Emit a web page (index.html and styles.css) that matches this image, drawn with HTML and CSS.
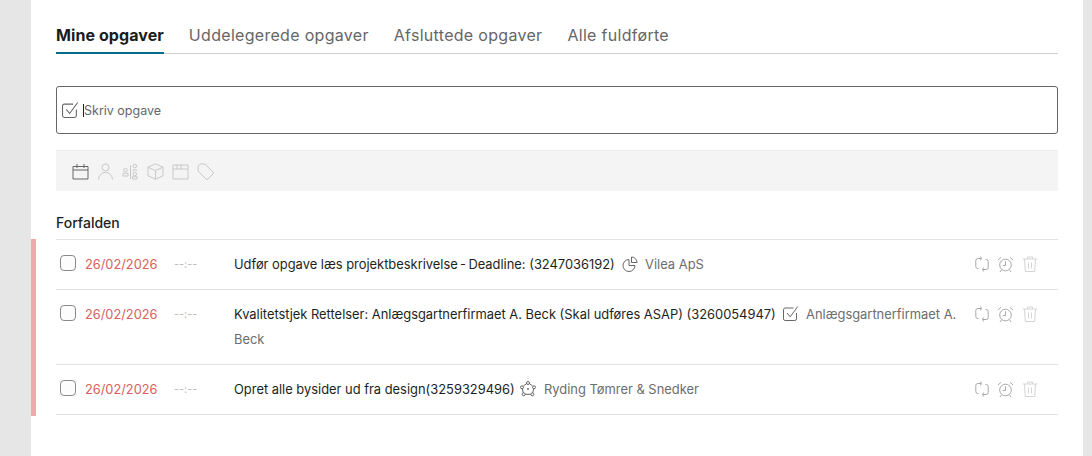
FILE: index.html
```html
<!DOCTYPE html>
<html lang="da">
<head>
  <meta charset="UTF-8" />
  <title>Mine opgaver</title>
  <link rel="stylesheet" href="styles.css">
</head>
<body>
  <svg class="defs" width="0" height="0">
    <symbol id="i-check" viewBox="0 0 16 16"><path d="M13.500 7v5.800a1.700 1.700 0 0 1-1.700 1.700H2.200A1.700 1.700 0 0 1 .5 12.800V3.700A1.700 1.700 0 0 1 2.200 2H10.500M4 7l3.200 3.800L14.800 .5"/></symbol>
    <symbol id="i-repeat" viewBox="0 0 14 16"><path d="M6 2.500H2.800A2 2 0 0 0 .8 4.500v6a2 2 0 0 0 2 2H3.500M5 .6 7 2.500 5 4.400M8 13.500h3.200a2 2 0 0 0 2-2v-6a2 2 0 0 0-2-2H10.500M9 15.400 7 13.500 9 11.600"/></symbol>
    <symbol id="i-alarm" viewBox="0 0 17 17"><circle cx="8.500" cy="9" r="5.800"/><path d="M8.500 5.200v4.300H5.800M1 4 4 1.300M16 4 13 1.300M4.500 13.800 3 16M12.500 13.800 14 16"/></symbol>
    <symbol id="i-trash" viewBox="0 0 16 16"><path d="M.8 3h14.400M5.500 3V1h5v2M2.500 3l.8 12.500h9.400L13.500 3M6.500 6.500v6M9.500 6.500v6"/></symbol>
  </svg>

  <main class="page">
    <nav class="tabs">
      <a class="tab active" href="#">Mine opgaver</a>
      <a class="tab" href="#">Uddelegerede opgaver</a>
      <a class="tab" href="#">Afsluttede opgaver</a>
      <a class="tab" href="#">Alle fuldførte</a>
    </nav>

    <div class="task-input">
      <svg class="icon-check-lg"><use href="#i-check"/></svg>
      <span class="caret"></span>
      <span class="placeholder">Skriv opgave</span>
    </div>

    <div class="toolbar">
      <svg class="tool tool-on" viewBox="0 0 17 17"><path d="M1 3.500h15v12.500H1zM1 7h15M5 1v4M12 1v4"/></svg>
      <svg class="tool" viewBox="0 0 17 17"><circle cx="8.500" cy="4.500" r="3.500"/><path d="M1.500 16.500c.5-4.500 3.200-7 7-7s6.500 2.500 7 7"/></svg>
      <svg class="tool" viewBox="0 0 17 17"><circle cx="3.500" cy="7" r="1.800"/><path d="M1 13v-2.800h5V13zM8.500 2v14"/><circle cx="12.800" cy="3" r="1.800"/><path d="M10.500 8c0-1.800 4.600-1.800 4.600 0"/><circle cx="12.800" cy="11" r="1.800"/><path d="M10.500 16v-2.300h4.600V16z"/></svg>
      <svg class="tool" viewBox="0 0 17 17"><path d="M8.500 .8 16 4.200v8.600L8.500 16.200 1 12.800V4.200zM1 4.200 8.500 7.600 16 4.200M8.500 7.600v8.600"/></svg>
      <svg class="tool" viewBox="0 0 17 17"><path d="M1 2h15v14H1zM1 6h15M5 2v4M9 2v4"/></svg>
      <svg class="tool" viewBox="0 0 17 17"><path d="M1 3 3.500 1H8l8 8a1.500 1.500 0 0 1 0 2l-5 5a1.500 1.500 0 0 1-2 0L1 8zM5 4.500h.1"/></svg>
    </div>

    <h2 class="group-title">Forfalden</h2>

    <ul class="tasks">
      <li class="task">
        <input class="task-box" type="checkbox">
        <span class="task-date">26/02/2026</span>
        <span class="task-time">--:--</span>
        <p class="task-text">Udfør opgave læs projektbeskrivelse&thinsp;-&thinsp;Deadline: (3247036192)
          <svg class="kind" viewBox="0 0 16 16"><path d="M7 3.500a6 6 0 1 0 6 6H7zM9.500 1v5.500H15A5.500 5.500 0 0 0 9.500 1z"/></svg>
          <span class="client">Vilea ApS</span></p>
        <div class="actions">
          <svg class="act"><use href="#i-repeat"/></svg>
          <svg class="act act-alarm"><use href="#i-alarm"/></svg>
          <svg class="act act-trash"><use href="#i-trash"/></svg>
        </div>
      </li>
      <li class="task">
        <input class="task-box" type="checkbox">
        <span class="task-date">26/02/2026</span>
        <span class="task-time">--:--</span>
        <p class="task-text">Kvalitetstjek Rettelser: Anlægsgartnerfirmaet A. Beck (Skal udføres ASAP) (3260054947)
          <svg class="kind"><use href="#i-check"/></svg>
          <span class="client">Anlægsgartnerfirmaet A.</span>
          <span class="client">Beck</span></p>
        <div class="actions">
          <svg class="act"><use href="#i-repeat"/></svg>
          <svg class="act act-alarm"><use href="#i-alarm"/></svg>
          <svg class="act act-trash"><use href="#i-trash"/></svg>
        </div>
      </li>
      <li class="task">
        <input class="task-box" type="checkbox">
        <span class="task-date">26/02/2026</span>
        <span class="task-time">--:--</span>
        <p class="task-text">Opret alle bysider ud fra design(3259329496)
          <svg class="kind kind-hub" viewBox="0 0 18 18"><path d="M7.500 3.700 4.500 5.800M10.500 3.700 13.500 5.800M3.300 8.800 4.300 12.800M14.700 8.800 13.700 12.800M6.100 14.300h5.800"/><circle cx="9" cy="3" r="1.500"/><circle cx="3" cy="7.300" r="1.500"/><circle cx="15" cy="7.300" r="1.500"/><circle cx="4.600" cy="14.300" r="1.500"/><circle cx="13.400" cy="14.300" r="1.500"/><circle cx="9" cy="9" r=".6"/></svg>
          <span class="client">Ryding Tømrer &amp; Snedker</span></p>
        <div class="actions">
          <svg class="act"><use href="#i-repeat"/></svg>
          <svg class="act act-alarm"><use href="#i-alarm"/></svg>
          <svg class="act act-trash"><use href="#i-trash"/></svg>
        </div>
      </li>
    </ul>
  </main>
</body>
</html>
```

FILE: styles.css
```css
body {
  margin: 0;
  height: 456px;
  overflow: hidden;
  background: #e6e6e6;
  font-family: 'Inter', sans-serif;
  color: #1c1f22;
}
.defs {
  display: block;
}
svg {
  fill: none;
  stroke-width: 1;
}
.page {
  margin: 0 9px 0 31px;
  height: 456px;
  padding: 0 25px;
  background: #fff;
  box-sizing: border-box;
}

/* tabs */
.tabs {
  display: flex;
  gap: 25px;
  padding-top: 24px;
  border-bottom: 1px solid #d0d0d0;
}
.tab {
  height: 28px;
  margin-bottom: -1px;
  font-size: 16px;
  line-height: 22px;
  font-weight: 400;
  letter-spacing: .3px;
  color: #666;
  text-decoration: none;
}
.tab.active {
  font-weight: 700;
  letter-spacing: .08px;
  color: #1a1c1e;
  border-bottom: 2px solid #086a8a;
}

/* new task */
.task-input {
  display: flex;
  align-items: center;
  height: 48px;
  margin-top: 32px;
  padding-left: 5px;
  box-sizing: border-box;
  border: 1px solid #666;
  border-radius: 3px;
}
.icon-check-lg {
  width: 17px;
  height: 17px;
  stroke: #666;
}
.caret {
  width: 1px;
  height: 13px;
  margin-left: 4px;
  background: #222;
}
.placeholder {
  font-size: 12.500px;
  color: #666;
}
.toolbar {
  display: flex;
  align-items: center;
  gap: 8px;
  height: 41px;
  margin-top: 16px;
  padding-left: 16px;
  background: #f4f4f4;
  border-top: 1px solid #ececec;
  box-sizing: border-box;
}
.tool {
  width: 17px;
  height: 17px;
  stroke: #c8c8c8;
}
.tool-on {
  stroke: #666;
}

/* list */
.group-title {
  margin: 24px 0 0;
  height: 24px;
  font-size: 14px;
  line-height: 16px;
  font-weight: 500;
  color: #1c1f22;
}
.tasks {
  position: relative;
  margin: 0;
  padding: 0;
  list-style: none;
  border-top: 1px solid #e3e3e3;
}
.tasks::before {
  content: "";
  position: absolute;
  left: -25px;
  top: -1px;
  bottom: -1px;
  width: 5px;
  background: #f0a8a8;
}
.task {
  display: flex;
  align-items: flex-start;
  padding: 12px 0 12px 4px;
  border-bottom: 1px solid #e3e3e3;
}
.task-box {
  flex: none;
  appearance: none;
  width: 16px;
  height: 16px;
  margin: 3px 9px 0 0;
  background: #fcfcfc;
  border: 1px solid #8a8a8a;
  border-radius: 4px;
  box-sizing: border-box;
}
.task-date {
  flex: none;
  width: 89px;
  font-size: 12.800px;
  line-height: 25px;
  color: #d9605c;
}
.task-time {
  flex: none;
  width: 60px;
  font-size: 11px;
  line-height: 25px;
  color: #bbb;
}
.task-text {
  flex: none;
  width: 732px;
  margin: 0;
  font-size: 12.900px;
  line-height: 25px;
  color: #1c1f22;
}
.kind {
  width: 16px;
  height: 16px;
  margin: 0 3px 0 4px;
  vertical-align: -3px;
  stroke: #666;
}
.kind-hub {
  width: 18px;
  height: 18px;
  margin-left: 1px;
  vertical-align: -4px;
}
.client {
  color: #6d6d6d;
}
.actions {
  display: flex;
  gap: 8px;
  margin: 4px 0 0 9px;
}
.act {
  width: 14px;
  height: 16px;
  stroke: #a8a8a8;
}
.act-alarm {
  width: 17px;
  height: 17px;
}
.act-trash {
  width: 16px;
  stroke: #d4d4d4;
}
```
